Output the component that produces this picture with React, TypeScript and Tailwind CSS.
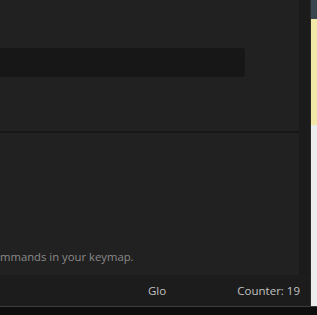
export default function App() {
  return (
    <div
      className="flex h-[315px] w-[317px] flex-col overflow-hidden bg-[#0d0d0d]"
      style={{ fontFamily: '"Open Sans", "Noto Sans", sans-serif' }}
    >
      <div className="flex h-[306px] flex-row">
        <div className="flex w-[310px] flex-col">
          <div className="flex h-[275px] flex-row">
            <div className="flex w-[299px] flex-col bg-[#212121]">
              <div className="h-[48px]" />
              <div className="h-[29px] w-[245px] rounded-r-[3px] bg-[#171717]" />
              <div className="h-[54px]" />
              <div className="h-[2px] bg-[#171717]" />
              <div className="flex flex-1 flex-col justify-end pb-[10px]">
                <p className="whitespace-nowrap text-[11.3px] leading-[16px] text-[#8a8a8a]">
                  mmands in your keymap.
                </p>
              </div>
            </div>
            <div className="w-[11px] bg-[#1b1b1b]" />
          </div>
          <div className="flex h-[31px] items-center bg-[#1c1c1c] text-[11.5px] text-[#c2c2c2]">
            <span className="ml-[148px]">Glo</span>
            <span className="ml-auto mr-[10px]">Counter: 19</span>
          </div>
        </div>
        <div className="w-px bg-[#2a2a2a]" />
        <div className="flex flex-1 flex-col">
          <div className="h-[19px] bg-[#3b4651]" />
          <div className="h-[106px] bg-[#f1e7a6]" />
          <div className="flex-1 bg-[#ececec]" />
        </div>
      </div>
      <div className="h-[9px] border-t border-[#3c3c3c] bg-[#0d0d0d]" />
    </div>
  );
}
